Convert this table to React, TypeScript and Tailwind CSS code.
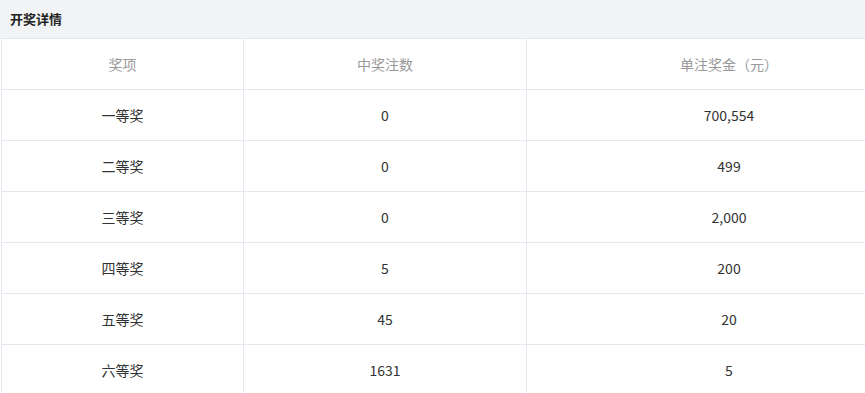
import React from 'react';

const rows = [
  { name: '一等奖', count: '0', prize: '700,554' },
  { name: '二等奖', count: '0', prize: '499' },
  { name: '三等奖', count: '0', prize: '2,000' },
  { name: '四等奖', count: '5', prize: '200' },
  { name: '五等奖', count: '45', prize: '20' },
  { name: '六等奖', count: '1631', prize: '5' },
];

const font = { fontFamily: '"Noto Sans CJK SC", "Open Sans", sans-serif' };

export default function App() {
  return (
    <div className="w-[865px] h-[393px] overflow-hidden bg-white" style={font}>
      <div className="h-[39px] bg-[#f2f3f5] border-b border-[#e4e7ed] flex items-center px-[10px]">
        <span className="text-[13px] font-bold text-[#222]">开奖详情</span>
      </div>
      <div className="w-[930px] border-l border-[#e4e7ed] ml-px">
        <div className="grid grid-cols-[242px_283px_404px] h-[51px] border-b border-[#e4e7ed] text-[14px] text-[#999]">
          <div className="flex items-center justify-center border-r border-[#e4e7ed]">奖项</div>
          <div className="flex items-center justify-center border-r border-[#e4e7ed]">中奖注数</div>
          <div className="flex items-center justify-center">单注奖金（元）</div>
        </div>
        {rows.map((r) => (
          <div key={r.name} className="grid grid-cols-[242px_283px_404px] h-[51px] border-b border-[#e4e7ed] text-[14px] text-[#333]">
            <div className="flex items-center justify-center border-r border-[#e4e7ed]">{r.name}</div>
            <div className="flex items-center justify-center border-r border-[#e4e7ed]">{r.count}</div>
            <div className="flex items-center justify-center">{r.prize}</div>
          </div>
        ))}
      </div>
    </div>
  );
}
